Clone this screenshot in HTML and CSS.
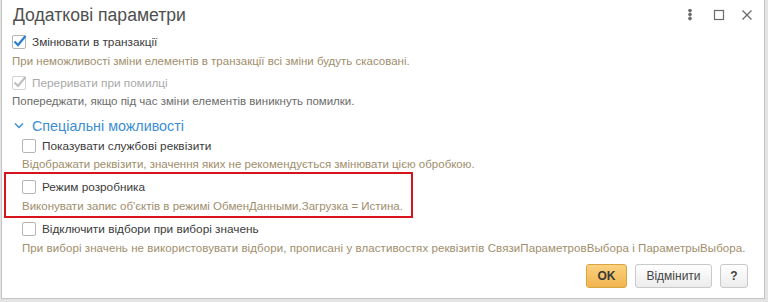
FILE: index.html
```html
<!DOCTYPE html>
<html lang="uk">
<head>
<meta charset="utf-8">
<title>Додаткові параметри</title>
<link rel="stylesheet" href="styles.css">
</head>
<body>
<div class="dialog">
  <div class="header">
    <div class="title">Додаткові параметри</div>
    <div class="tools">
      <svg class="tool" width="10" height="12" viewBox="0 0 10 12"><circle cx="5" cy="1.5" r="1.4"/><circle cx="5" cy="5.5" r="1.4"/><circle cx="5" cy="9.5" r="1.4"/></svg>
      <svg class="tool" width="12" height="12" viewBox="0 0 12 12"><rect x="1.5" y="1.5" width="9" height="9" fill="none" stroke-width="1.2"/></svg>
      <svg class="tool" width="12" height="12" viewBox="0 0 12 12"><path d="M1.5 1.5 L10.5 10.5 M10.5 1.5 L1.5 10.5" fill="none" stroke-width="1.3"/></svg>
    </div>
  </div>
  <div class="content">
    <label class="row">
      <span class="cb checked"><svg width="16" height="14" viewBox="0 0 16 14"><path d="M2.5 7.5 L6 11 L13.5 2" fill="none" stroke="#2b7fd0" stroke-width="2.2"/></svg></span>
      <span class="label">Змінювати в транзакції</span>
    </label>
    <div class="hint h1">При неможливості зміни елементів в транзакції всі зміни будуть скасовані.</div>
    <label class="row r2">
      <span class="cb disabled"><svg width="16" height="14" viewBox="0 0 16 14"><path d="M2.5 7.5 L6 11 L13.5 2" fill="none" stroke="#bdbdbd" stroke-width="2"/></svg></span>
      <span class="label muted">Переривати при помилці</span>
    </label>
    <div class="hint grey h2">Попереджати, якщо під час зміни елементів виникнуть помилки.</div>

    <div class="section">
      <svg class="chev" width="10" height="8" viewBox="0 0 10 8"><path d="M1 1.5 L5 5.5 L9 1.5" fill="none" stroke="#3b8ed4" stroke-width="1.5"/></svg>
      <span>Спеціальні можливості</span>
    </div>
    <div class="group">
      <label class="row">
        <span class="cb"></span>
        <span class="label">Показувати службові реквізити</span>
      </label>
      <div class="hint h3">Відображати реквізити, значення яких не рекомендується змінювати цією обробкою.</div>
      <div class="mark">
        <label class="row">
          <span class="cb"></span>
          <span class="label">Режим розробника</span>
        </label>
        <div class="hint">Виконувати запис об'єктів в режимі ОбменДанными.Загрузка = Истина.</div>
      </div>
      <label class="row r5">
        <span class="cb"></span>
        <span class="label">Відключити відбори при виборі значень</span>
      </label>
      <div class="hint h5">При виборі значень не використовувати відбори, прописані у властивостях реквізитів СвязиПараметровВыбора і ПараметрыВыбора.</div>
    </div>
    <div class="buttons">
      <button class="btn ok">OK</button>
      <button class="btn">Відмінити</button>
      <button class="btn help">?</button>
    </div>
  </div>
</div>
</body>
</html>
```
FILE: styles.css
```css
html, body {
  margin: 0;
  padding: 0;
  background: #e4e4e4;
  font-family: "Liberation Sans", Arial, sans-serif;
}
.dialog {
  box-sizing: border-box;
  margin-left: 1px;
  width: 764px;
  height: 299px;
  background: #fff;
  border: 1px solid #c4c4c4;
  border-top: none;
}
.header {
  display: flex;
  align-items: flex-start;
  height: 32px;
  padding-left: 11px;
}
.title {
  font-size: 17.6px;
  color: #4f4f4f;
  line-height: 20px;
  padding-top: 5px;
}
.tools {
  margin-left: auto;
  display: flex;
  gap: 16px;
  padding-top: 9px;
  padding-right: 11px;
}
.tool { fill: #6a6a6a; stroke: #6a6a6a; }
.tools .tool:first-child { margin-right: 2px; }
.content {
  padding-left: 10px;
}
.row {
  display: flex;
  align-items: center;
  height: 20px;
  font-size: 11.8px;
  color: #3b3b3b;
}
.r2 { margin-top: 3px; }
.r5 { margin-top: 1px; }
.cb {
  box-sizing: border-box;
  width: 14px;
  height: 14px;
  border: 1px solid #b5b5b5;
  border-radius: 2px;
  background: #fff;
  position: relative;
  flex: none;
}
.cb svg {
  position: absolute;
  left: -1px;
  top: -2px;
}
.cb.disabled { border-color: #d2d2d2; }
.label { margin-left: 6px; }
.muted { color: #a9a9a9; }
.hint {
  font-size: 11.5px;
  line-height: 18px;
  height: 18px;
  color: #a08e6b;
  white-space: nowrap;
}
.hint.grey { color: #6b6b6b; }
.h2 { height: 16px; line-height: 16px; }
.h5 { letter-spacing: 0.08px; }
.section {
  display: flex;
  align-items: center;
  height: 20px;
  margin-top: 7px;
  font-size: 14.3px;
  color: #3b8ed4;
}
.chev { margin-left: 2px; margin-right: 8px; }
.group {
  padding-left: 10px;
}
.h3 { height: 16px; line-height: 16px; }
.mark {
  box-sizing: border-box;
  width: 409px;
  margin-left: -18px;
  padding-left: 16px;
  padding-top: 3px;
  height: 46px;
  border: 2px solid #d7141c;
}
.mark .row { height: 20px; }
.buttons {
  display: flex;
  justify-content: flex-end;
  gap: 8px;
  margin-top: 7px;
  padding-right: 16px;
}
.btn {
  box-sizing: border-box;
  height: 24px;
  font-family: "Liberation Sans", Arial, sans-serif;
  font-size: 12px;
  color: #444;
  border: 1px solid #c9c9c9;
  border-radius: 3px;
  background: linear-gradient(#ffffff, #ececec);
  padding: 0;
  width: 77px;
}
.btn.ok {
  width: 41px;
  font-weight: bold;
  color: #3a3a3a;
  border-color: #d9a442;
  background: linear-gradient(#fbd17f, #f0b44f);
}
.btn.help {
  width: 28px;
  font-weight: bold;
}
```
